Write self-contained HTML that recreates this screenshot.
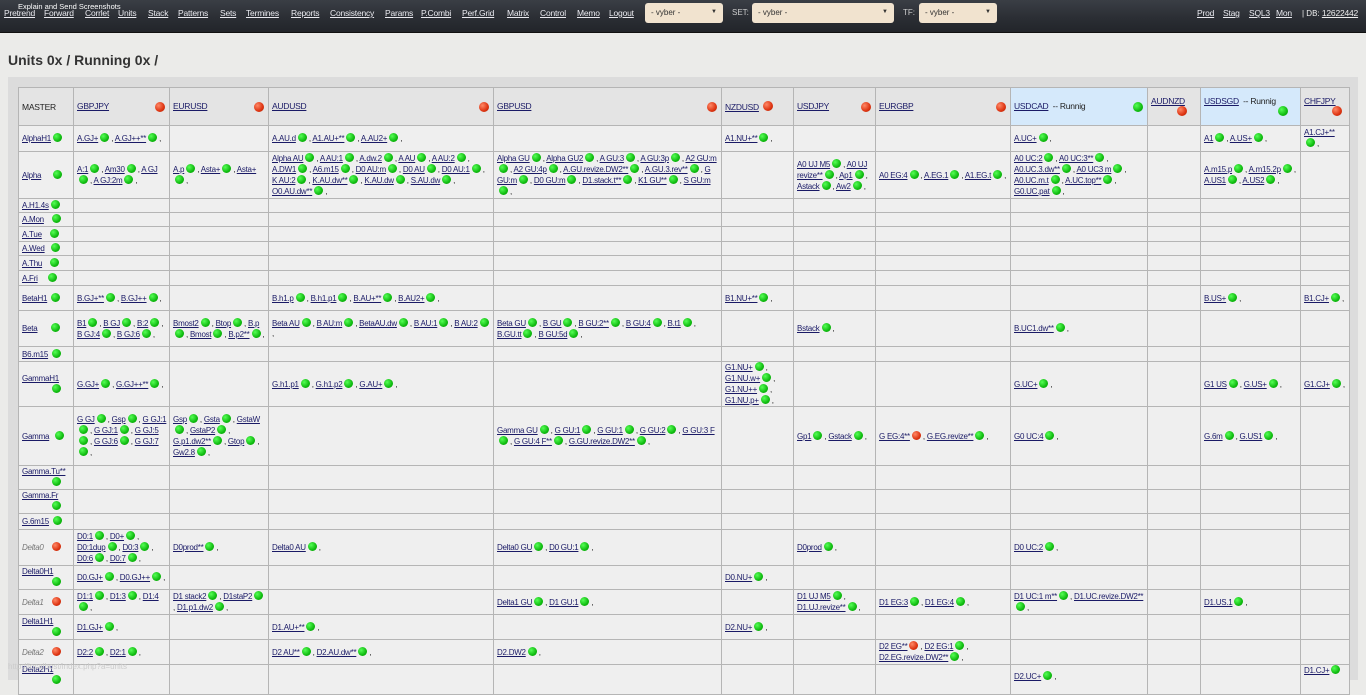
<!DOCTYPE html>
<html><head><meta charset="utf-8"><style>
*{box-sizing:border-box}
body{margin:0;width:1366px;height:680px;overflow:hidden;background:#ebebe9;font-family:"Liberation Sans",sans-serif;font-size:8px;color:#222}
.nav{position:absolute;left:0;top:0;width:1366px;height:33px;background:linear-gradient(#3a3e45,#2a2d33 60%,#22252a);border-bottom:1px solid #111}
.nav a{color:#eaeaf0;text-decoration:underline;font-size:8.5px;position:absolute;top:8px;letter-spacing:-.2px;white-space:nowrap}
.sel{position:absolute;top:3px;height:20px;background:#f1e3cf;border-radius:3px;font-size:8px;color:#333;padding:5px 6px}
.sel:after{content:"▼";position:absolute;right:6px;top:6px;font-size:6px}
.lbl{position:absolute;top:8px;color:#ccc;font-size:8px;white-space:nowrap}
h1{position:absolute;left:8px;top:52px;margin:0;font-size:14px;font-weight:bold;color:#333}
.wrap{position:absolute;left:8px;top:77px;width:1350px;height:603px;background:#dcdcdc}
table{position:absolute;left:10px;top:10px;border-collapse:collapse;table-layout:fixed;width:1331px}
td,th{border:1px solid #b5b5b5;background:#efefef;padding:0 2px 0 3px;vertical-align:middle;line-height:10px;overflow:hidden;font-weight:normal;text-align:left;letter-spacing:-.25px}
th{background:#e4e4e4;height:38px;font-size:8.5px}
th.b{background:#d5e9fb}
a{color:#1a1a66;text-decoration:underline}
i{display:inline-block;width:9px;height:9px;border-radius:50%;background:radial-gradient(circle at 35% 35%,#5f5,#1b1 60%,#090);vertical-align:-1px;margin:0 2px}
i.r{background:radial-gradient(circle at 35% 35%,#f86,#d31 60%,#a20)}
th i{width:10px;height:10px}
.fr{float:right;margin-top:1px}
td.m{white-space:nowrap}
.d{color:#777;font-style:italic}
.foot{position:absolute;left:8px;top:662px;color:#ccc;font-size:8px}
</style></head><body>
<div class="nav">
<span style="position:absolute;left:18px;top:2px;color:#fff;font-size:7.5px">Explain and Send Screenshots</span>
<a style="left:4px">Pretrend</a><a style="left:44px">Forward</a><a style="left:85px">Corrlet</a><a style="left:118px">Units</a><a style="left:148px">Stack</a><a style="left:178px">Patterns</a><a style="left:220px">Sets</a><a style="left:246px">Termines</a><a style="left:291px">Reports</a><a style="left:330px">Consistency</a><a style="left:385px">Params</a><a style="left:421px">P.Combi</a><a style="left:462px">Perf.Grid</a><a style="left:507px">Matrix</a><a style="left:540px">Control</a><a style="left:577px">Memo</a><a style="left:609px">Logout</a>
<div class="sel" style="left:645px;width:78px">- vyber -</div>
<span class="lbl" style="left:732px">SET:</span><div class="sel" style="left:752px;width:142px">- vyber -</div>
<span class="lbl" style="left:903px">TF:</span><div class="sel" style="left:919px;width:78px">- vyber -</div>
<a style="left:1197px">Prod</a><a style="left:1223px">Stag</a><a style="left:1249px">SQL3</a><a style="left:1276px">Mon</a><span class="lbl" style="left:1302px;color:#eee">| DB: <a style="position:static;color:#eee">12622442</a></span>
</div>
<h1>Units 0x / Running 0x /</h1>
<div class="wrap">
<table>
<colgroup><col style="width:55px"><col style="width:96px"><col style="width:99px"><col style="width:225px"><col style="width:228px"><col style="width:72px"><col style="width:82px"><col style="width:135px"><col style="width:137px"><col style="width:53px"><col style="width:100px"><col style="width:49px"></colgroup>
<tr><th>MASTER</th><th><a>GBPJPY</a><i class="r fr"></i></th><th><a>EURUSD</a><i class="r fr"></i></th><th><a>AUDUSD</a><i class="r fr"></i></th><th><a>GBPUSD</a><i class="r fr"></i></th><th><a>NZDUSD</a> <i class="r"></i></th><th><a>USDJPY</a><i class="r fr"></i></th><th><a>EURGBP</a><i class="r fr"></i></th><th class="b"><a>USDCAD</a> &nbsp;-- Runnig<i class="fr"></i></th><th><a>AUDNZD</a><br><i class="r" style="margin-left:26px"></i></th><th class="b"><a>USDSGD</a> &nbsp;-- Runnig<br><i style="margin-left:74px"></i></th><th><a>CHFJPY</a><br><i class="r" style="margin-left:28px"></i></th></tr>
<tr style="height:26px"><td class="m"><a>AlphaH1</a><i></i></td><td><a>A.GJ+</a><i></i>, <a>A.GJ++**</a><i></i>,</td><td></td><td><a>A.AU.d</a><i></i>, <a>A1.AU+**</a><i></i>, <a>A.AU2+</a><i></i>,</td><td></td><td><a>A1.NU+**</a><i></i>,</td><td></td><td></td><td><a>A.UC+</a><i></i>,</td><td></td><td><a>A1</a><i></i>, <a>A.US+</a><i></i>,</td><td><a>A1.CJ+**</a><i></i>,</td></tr>
<tr style="height:47px"><td class="m"><a>Alpha</a> &nbsp; &nbsp; <i></i></td><td><a>A:1</a><i></i>, <a>Am30</a><i></i>, <a>A GJ</a><i></i>, <a>A GJ:2m</a><i></i>,</td><td><a>A.p</a><i></i>, <a>Asta+</a><i></i>, <a>Asta+</a><i></i>,</td><td><a>Alpha AU</a><i></i>, <a>A AU:1</a><i></i>, <a>A.dw.2</a><i></i>, <a>A AU</a><i></i>, <a>A AU:2</a><i></i>, <a>A.DW1</a><i></i>, <a>A6.m15</a><i></i>, <a>D0 AU:m</a><i></i>, <a>D0 AU</a><i></i>, <a>D0 AU:1</a><i></i>, <a>K AU:2</a><i></i>, <a>K.AU.dw**</a><i></i>, <a>K.AU.dw</a><i></i>, <a>S.AU.dw</a><i></i>, <a>O0.AU.dw**</a><i></i>,</td><td><a>Alpha GU</a><i></i>, <a>Alpha GU2</a><i></i>, <a>A GU:3</a><i></i>, <a>A GU:3p</a><i></i>, <a>A2 GU:m</a><i></i>, <a>A2 GU:4p</a><i></i>, <a>A.GU.revize.DW2**</a><i></i>, <a>A.GU.3.rev**</a><i></i>, <a>G GU:m</a><i></i>, <a>D0 GU:m</a><i></i>, <a>D1.stack.t**</a><i></i>, <a>K1 GU**</a><i></i>, <a>S GU:m</a><i></i>,</td><td></td><td><a>A0 UJ M5</a><i></i>, <a>A0 UJ revize**</a><i></i>, <a>Ap1</a><i></i>, <a>Astack</a><i></i>, <a>Aw2</a><i></i>,</td><td><a>A0 EG:4</a><i></i>, <a>A.EG.1</a><i></i>, <a>A1.EG.t</a><i></i>,</td><td><a>A0 UC:2</a><i></i>, <a>A0 UC:3**</a><i></i>, <a>A0.UC.3.dw**</a><i></i>, <a>A0 UC3 m</a><i></i>, <a>A0.UC.m.t</a><i></i>, <a>A.UC.top**</a><i></i>, <a>G0.UC.pat</a><i></i>,</td><td></td><td><a>A.m15.p</a><i></i>, <a>A.m15.2p</a><i></i>, <a>A.US1</a><i></i>, <a>A.US2</a><i></i>,</td><td></td></tr>
<tr style="height:14px"><td class="m"><a>A.H1.4s</a><i></i></td><td></td><td></td><td></td><td></td><td></td><td></td><td></td><td></td><td></td><td></td><td></td></tr>
<tr style="height:14px"><td class="m"><a>A.Mon</a> &nbsp; <i></i></td><td></td><td></td><td></td><td></td><td></td><td></td><td></td><td></td><td></td><td></td><td></td></tr>
<tr style="height:15px"><td class="m"><a>A.Tue</a> &nbsp; <i></i></td><td></td><td></td><td></td><td></td><td></td><td></td><td></td><td></td><td></td><td></td><td></td></tr>
<tr style="height:14px"><td class="m"><a>A.Wed</a> &nbsp;<i></i></td><td></td><td></td><td></td><td></td><td></td><td></td><td></td><td></td><td></td><td></td><td></td></tr>
<tr style="height:15px"><td class="m"><a>A.Thu</a> &nbsp; <i></i></td><td></td><td></td><td></td><td></td><td></td><td></td><td></td><td></td><td></td><td></td><td></td></tr>
<tr style="height:15px"><td class="m"><a>A.Fri</a> &nbsp; &nbsp;<i></i></td><td></td><td></td><td></td><td></td><td></td><td></td><td></td><td></td><td></td><td></td><td></td></tr>
<tr style="height:25px"><td class="m"><a>BetaH1</a> <i></i></td><td><a>B.GJ+**</a><i></i>, <a>B.GJ++</a><i></i>,</td><td></td><td><a>B.h1.p</a><i></i>, <a>B.h1.p1</a><i></i>, <a>B.AU+**</a><i></i>, <a>B.AU2+</a><i></i>,</td><td></td><td><a>B1.NU+**</a><i></i>,</td><td></td><td></td><td></td><td></td><td><a>B.US+</a><i></i>,</td><td><a>B1.CJ+</a><i></i>,</td></tr>
<tr style="height:36px"><td class="m"><a>Beta</a> &nbsp; &nbsp; &nbsp;<i></i></td><td><a>B1</a><i></i>, <a>B GJ</a><i></i>, <a>B:2</a><i></i>, <a>B GJ:4</a><i></i>, <a>B GJ:6</a><i></i>,</td><td><a>Bmost2</a><i></i>, <a>Btop</a><i></i>, <a>B.p</a><i></i>, <a>Bmost</a><i></i>, <a>B.p2**</a><i></i>,</td><td><a>Beta AU</a><i></i>, <a>B AU:m</a><i></i>, <a>BetaAU.dw</a><i></i>, <a>B AU:1</a><i></i>, <a>B AU:2</a><i></i>,</td><td><a>Beta GU</a><i></i>, <a>B GU</a><i></i>, <a>B GU:2**</a><i></i>, <a>B GU:4</a><i></i>, <a>B.t1</a><i></i>, <a>B.GU.tt</a><i></i>, <a>B GU:5d</a><i></i>,</td><td></td><td><a>Bstack</a><i></i>,</td><td></td><td><a>B.UC1.dw**</a><i></i>,</td><td></td><td></td><td></td></tr>
<tr style="height:15px"><td class="m"><a>B6.m15</a> <i></i></td><td></td><td></td><td></td><td></td><td></td><td></td><td></td><td></td><td></td><td></td><td></td></tr>
<tr style="height:45px"><td><a>GammaH1</a><br><i style="margin-left:30px"></i></td><td><a>G.GJ+</a><i></i>, <a>G.GJ++**</a><i></i>,</td><td></td><td><a>G.h1.p1</a><i></i>, <a>G.h1.p2</a><i></i>, <a>G.AU+</a><i></i>,</td><td></td><td><a>G1.NU+</a><i></i>, <a>G1.NU.w+</a><i></i>, <a>G1.NU++</a><i></i>, <a>G1.NU.p+</a><i></i>,</td><td></td><td></td><td><a>G.UC+</a><i></i>,</td><td></td><td><a>G1 US</a><i></i>, <a>G.US+</a><i></i>,</td><td><a>G1.CJ+</a><i></i>,</td></tr>
<tr style="height:59px"><td class="m"><a>Gamma</a> &nbsp;<i></i></td><td><a>G GJ</a><i></i>, <a>Gsp</a><i></i>, <a>G GJ:1</a><i></i>, <a>G GJ:1</a><i></i>, <a>G GJ:5</a><i></i>, <a>G GJ:6</a><i></i>, <a>G GJ:7</a><i></i>,</td><td><a>Gsp</a><i></i>, <a>Gsta</a><i></i>, <a>GstaW</a><i></i>, <a>GstaP2</a><i></i>, <a>G.p1.dw2**</a><i></i>, <a>Gtop</a><i></i>, <a>Gw2.8</a><i></i>,</td><td></td><td><a>Gamma GU</a><i></i>, <a>G GU:1</a><i></i>, <a>G GU:1</a><i></i>, <a>G GU:2</a><i></i>, <a>G GU:3 F</a><i></i>, <a>G GU:4 F**</a><i></i>, <a>G.GU.revize.DW2**</a><i></i>,</td><td></td><td><a>Gp1</a><i></i>, <a>Gstack</a><i></i>,</td><td><a>G EG:4**</a><i class="r"></i>, <a>G.EG.revize**</a><i></i>,</td><td><a>G0 UC:4</a><i></i>,</td><td></td><td><a>G.6m</a><i></i>, <a>G.US1</a><i></i>,</td><td></td></tr>
<tr style="height:24px"><td><a>Gamma.Tu**</a><br><i style="margin-left:30px"></i></td><td></td><td></td><td></td><td></td><td></td><td></td><td></td><td></td><td></td><td></td><td></td></tr>
<tr style="height:24px"><td><a>Gamma.Fr</a><br><i style="margin-left:30px"></i></td><td></td><td></td><td></td><td></td><td></td><td></td><td></td><td></td><td></td><td></td><td></td></tr>
<tr style="height:16px"><td class="m"><a>G.6m15</a> <i></i></td><td></td><td></td><td></td><td></td><td></td><td></td><td></td><td></td><td></td><td></td><td></td></tr>
<tr style="height:36px"><td class="m"><span class="d">Delta0</span> &nbsp; <i class="r"></i></td><td><a>D0:1</a><i></i>, <a>D0+</a><i></i>, <a>D0:1dup</a><i></i>, <a>D0:3</a><i></i>, <a>D0:6</a><i></i>, <a>D0:7</a><i></i>,</td><td><a>D0prod**</a><i></i>,</td><td><a>Delta0 AU</a><i></i>,</td><td><a>Delta0 GU</a><i></i>, <a>D0 GU:1</a><i></i>,</td><td></td><td><a>D0prod</a><i></i>,</td><td></td><td><a>D0 UC:2</a><i></i>,</td><td></td><td></td><td></td></tr>
<tr style="height:24px"><td><a>Delta0H1</a><br><i style="margin-left:30px"></i></td><td><a>D0.GJ+</a><i></i>, <a>D0.GJ++</a><i></i>,</td><td></td><td></td><td></td><td><a>D0.NU+</a><i></i>,</td><td></td><td></td><td></td><td></td><td></td><td></td></tr>
<tr style="height:25px"><td class="m"><span class="d">Delta1</span> &nbsp; <i class="r"></i></td><td><a>D1:1</a><i></i>, <a>D1:3</a><i></i>, <a>D1:4</a><i></i>,</td><td><a>D1 stack2</a><i></i>, <a>D1staP2</a><i></i>, <a>D1.p1.dw2</a><i></i>,</td><td></td><td><a>Delta1 GU</a><i></i>, <a>D1 GU:1</a><i></i>,</td><td></td><td><a>D1 UJ M5</a><i></i>, <a>D1.UJ.revize**</a><i></i>,</td><td><a>D1 EG:3</a><i></i>, <a>D1 EG:4</a><i></i>,</td><td><a>D1 UC:1 m**</a><i></i>, <a>D1.UC.revize.DW2**</a><i></i>,</td><td></td><td><a>D1.US.1</a><i></i>,</td><td></td></tr>
<tr style="height:25px"><td><a>Delta1H1</a><br><i style="margin-left:30px"></i></td><td><a>D1.GJ+</a><i></i>,</td><td></td><td><a>D1.AU+**</a><i></i>,</td><td></td><td><a>D2.NU+</a><i></i>,</td><td></td><td></td><td></td><td></td><td></td><td></td></tr>
<tr style="height:25px"><td class="m"><span class="d">Delta2</span> &nbsp; <i class="r"></i></td><td><a>D2:2</a><i></i>, <a>D2:1</a><i></i>,</td><td></td><td><a>D2 AU**</a><i></i>, <a>D2.AU.dw**</a><i></i>,</td><td><a>D2.DW2</a><i></i>,</td><td></td><td></td><td><a>D2 EG**</a><i class="r"></i>, <a>D2 EG:1</a><i></i>, <a>D2.EG.revize.DW2**</a><i></i>,</td><td></td><td></td><td></td><td></td></tr>
<tr style="height:30px"><td style="vertical-align:top"><a>Delta2H1</a><br><i style="margin-left:30px"></i></td><td></td><td></td><td></td><td></td><td></td><td></td><td></td><td style="vertical-align:top;padding-top:6px"><a>D2.UC+</a><i></i>,</td><td></td><td></td><td style="vertical-align:top"><a>D1.CJ+</a><i></i></td></tr>
</table>
</div>
<div class="foot">http://localhost/index.php?a=units</div>
</body></html>
